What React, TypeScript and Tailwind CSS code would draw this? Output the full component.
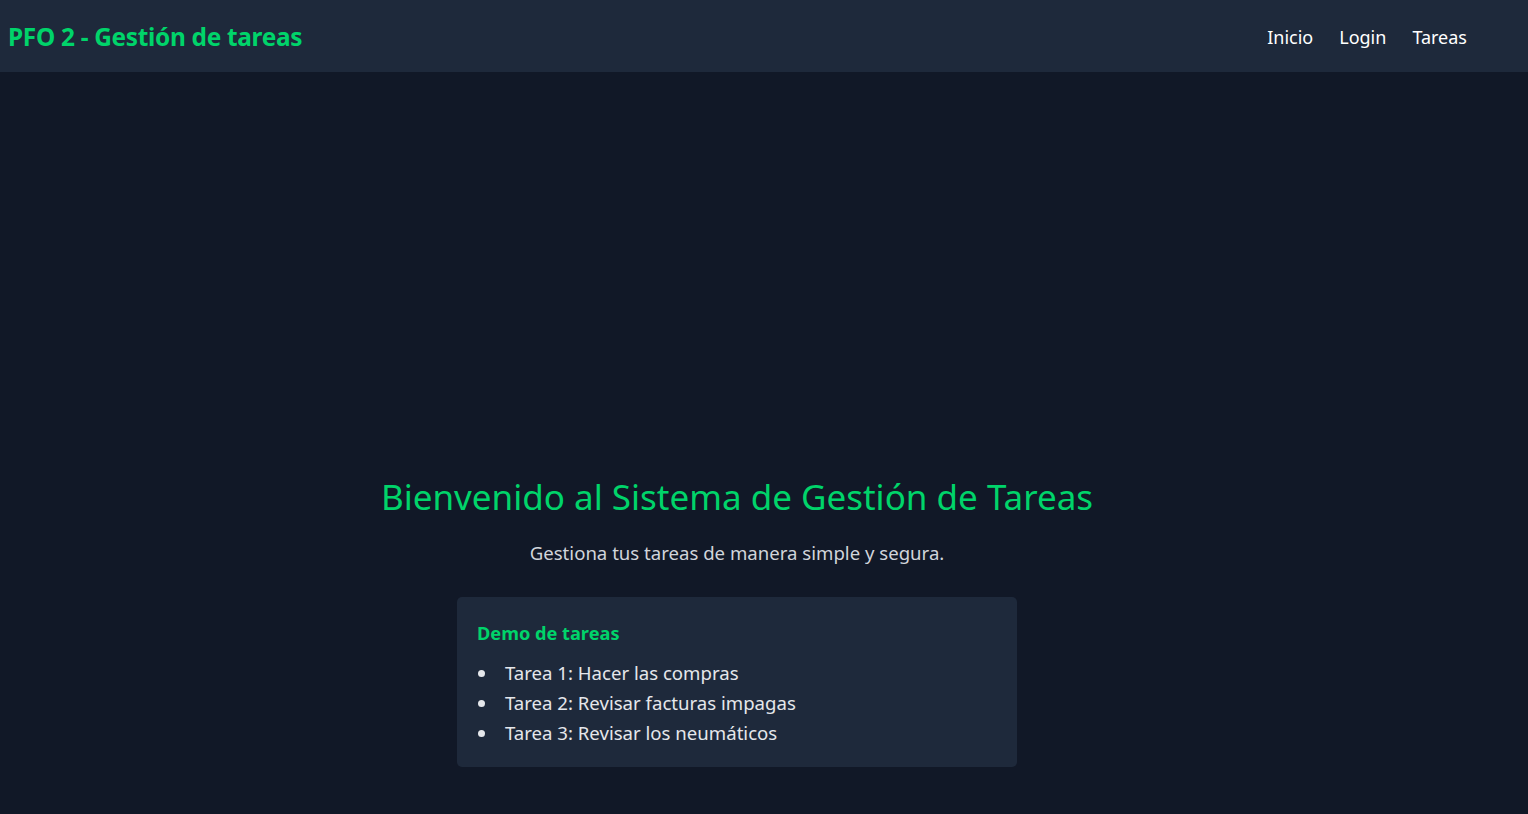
export default function App() {
  const font = { fontFamily: '"Noto Sans", "Open Sans", sans-serif' };
  const tasks = [
    "Tarea 1: Hacer las compras",
    "Tarea 2: Revisar facturas impagas",
    "Tarea 3: Revisar los neumáticos",
  ];
  return (
    <div className="min-h-screen bg-[#111827] flex flex-col" style={font}>
      <header className="h-[72px] bg-[#1e293b] flex items-center justify-between pl-2 pr-[61px]">
        <div className="text-[24.4px] font-bold text-[#00d46a] tracking-[-0.3px] pt-[2px]">PFO 2 - Gestión de tareas</div>
        <nav className="flex items-center gap-[26px] text-[18px] text-white pt-[2px]">
          <a>Inicio</a>
          <a>Login</a>
          <a>Tareas</a>
        </nav>
      </header>
      <main className="flex justify-center pr-[54px] pt-[400px]">
        <div className="flex flex-col items-center">
          <h1 className="text-[35px] leading-[50px] text-[#00d46a]">Bienvenido al Sistema de Gestión de Tareas</h1>
          <p className="mt-[19px] text-[18.6px] leading-[24px] text-[#d1d5db]">Gestiona tus tareas de manera simple y segura.</p>
          <div className="mt-[32px] w-[560px] h-[170px] bg-[#1e293b] rounded-[5px] px-5 pt-[24px]">
            <h2 className="text-[18.2px] font-bold leading-[24px] text-[#00d46a]">Demo de tareas</h2>
            <ul className="mt-[13px] text-[18.6px] leading-[30px] text-[#e5e7eb]">
              {tasks.map((t) => (
                <li key={t} className="flex items-center">
                  <span className="w-[7px] h-[7px] rounded-full bg-[#e5e7eb] ml-[1px] mr-[20px]" />
                  {t}
                </li>
              ))}
            </ul>
          </div>
        </div>
      </main>
    </div>
  );
}
